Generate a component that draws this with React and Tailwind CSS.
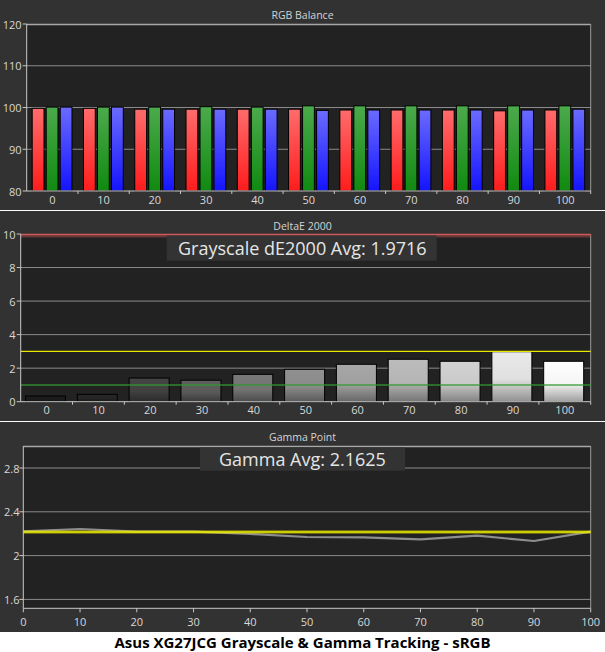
import React from 'react';

const rgbData = [
  [99.8, 100.1, 100.1],
  [99.8, 100.1, 100.1],
  [99.6, 100.1, 99.6],
  [99.6, 100.2, 99.6],
  [99.6, 100.1, 99.6],
  [99.6, 100.4, 99.3],
  [99.4, 100.4, 99.4],
  [99.4, 100.4, 99.4],
  [99.4, 100.4, 99.4],
  [99.2, 100.4, 99.4],
  [99.4, 100.4, 99.6],
];

const deltaData = [0.34, 0.44, 1.41, 1.28, 1.63, 1.93, 2.23, 2.53, 2.41, 2.98, 2.41];
const grays = ['#1c1c1c', '#262626', '#444444', '#5e5e5e', '#787878', '#909090', '#a6a6a6', '#bcbcbc', '#d2d2d2', '#e9e9e9', '#ffffff'];

// pixel offsets read off the original plot, svg coords
const gammaY = [85.3, 83, 85.7, 85.7, 88, 91, 91.3, 93.3, 89.7, 95, 85.7];

const steps = [0, 10, 20, 30, 40, 50, 60, 70, 80, 90, 100];

function Panel({ title, titleH, children }) {
  return (
    <div className="flex flex-col h-[210px] bg-[#323232]">
      <div className={`${titleH} pt-[8px] text-center text-[10.5px] leading-[14px] text-[#d4d4d4]`}>{title}</div>
      {children}
    </div>
  );
}

function RgbChart() {
  const left = 26.7, right = 590.7, bottom = 167;
  const gw = (right - left) / 11;
  const y = (v) => (bottom * (120 - v)) / 40;
  const fills = ['url(#red)', 'url(#green)', 'url(#blue)'];

  return (
    <svg width="605" height="186" className="block overflow-visible">
      <defs>
        <linearGradient id="red" x1="0" y1="0" x2="0" y2="1">
          <stop offset="0" stopColor="#ff6c6c" />
          <stop offset="1" stopColor="#ff1c1c" />
        </linearGradient>
        <linearGradient id="green" x1="0" y1="0" x2="0" y2="1">
          <stop offset="0" stopColor="#4caa4c" />
          <stop offset="1" stopColor="#108a10" />
        </linearGradient>
        <linearGradient id="blue" x1="0" y1="0" x2="0" y2="1">
          <stop offset="0" stopColor="#6b6bff" />
          <stop offset="1" stopColor="#1414ff" />
        </linearGradient>
      </defs>
      <rect x={left} y={0} width={right - left} height={bottom} fill="#222222" />
      {[110, 100, 90].map((v) => (
        <line key={v} x1={left} x2={right} y1={y(v)} y2={y(v)} stroke="#8a8a8a" />
      ))}
      <line x1={left} x2={right} y1={0.5} y2={0.5} stroke="#a8a8a8" strokeWidth="1.5" />
      <line x1={right} x2={right} y1={0} y2={bottom} stroke="#9a9a9a" />

      {rgbData.map((vals, i) =>
        vals.map((v, j) => (
          <rect
            key={`${i}-${j}`}
            x={left + i * gw + 5.5 + j * 14}
            y={y(v)}
            width={11.8}
            height={bottom - y(v)}
            fill={fills[j]}
            stroke="#000"
            strokeWidth="1"
          />
        ))
      )}

      <line x1={left} x2={left} y1={0} y2={bottom} stroke="#c8c8c8" />
      <line x1={left} x2={right} y1={bottom} y2={bottom} stroke="#c8c8c8" />
      {[120, 110, 100, 90, 80].map((v) => (
        <g key={v}>
          <line x1={left - 4} x2={left} y1={y(v)} y2={y(v)} stroke="#c8c8c8" />
          <text x={21.5} y={y(v)} textAnchor="end" dominantBaseline="central" fontSize="11" fill="#d8d8d8">{v}</text>
        </g>
      ))}
      {steps.map((s, i) => (
        <g key={s}>
          <line x1={left + (i + 1) * gw} x2={left + (i + 1) * gw} y1={bottom} y2={bottom + 3} stroke="#c8c8c8" />
          <text x={left + i * gw + gw / 2} y={bottom + 8} textAnchor="middle" dominantBaseline="central" fontSize="11" fill="#d8d8d8">{s}</text>
        </g>
      ))}
    </svg>
  );
}

function DeltaChart() {
  const left = 20.7, right = 590.7, bottom = 167.7;
  const gw = (right - left) / 11;
  const y = (v) => (bottom * (10 - v)) / 10;

  return (
    <svg width="605" height="187" className="block overflow-visible">
      <defs>
        <linearGradient id="shade" x1="0" y1="0" x2="0" y2="1">
          <stop offset="0" stopColor="#000" stopOpacity="0" />
          <stop offset="0.55" stopColor="#000" stopOpacity="0.04" />
          <stop offset="1" stopColor="#000" stopOpacity="0.38" />
        </linearGradient>
      </defs>
      <rect x={left} y={0} width={right - left} height={bottom} fill="#222222" />
      {[8, 6, 4, 2].map((v) => (
        <line key={v} x1={left} x2={right} y1={y(v)} y2={y(v)} stroke="#8a8a8a" />
      ))}
      <line x1={right} x2={right} y1={0} y2={bottom} stroke="#9a9a9a" />

      {deltaData.map((v, i) => (
        <g key={i}>
          <rect x={left + i * gw + 4.8} y={y(v)} width={40} height={bottom - y(v)} fill={grays[i]} />
          <rect x={left + i * gw + 4.8} y={y(v)} width={40} height={bottom - y(v)} fill="url(#shade)" stroke="#000" strokeWidth="1" />
        </g>
      ))}

      <line x1={left} x2={right} y1={2} y2={2} stroke="#b85050" strokeOpacity="0.45" strokeWidth="3" />
      <line x1={left} x2={right} y1={0.5} y2={0.5} stroke="#d05a5a" strokeWidth="1.5" />
      <line x1={left} x2={right} y1={y(3)} y2={y(3)} stroke="#e8e800" strokeWidth="1.3" />
      <line x1={left} x2={right} y1={y(1)} y2={y(1)} stroke="#2f9a2f" strokeOpacity="0.85" strokeWidth="1.5" />

      <rect x={166.7} y={1.5} width={270} height={25.2} fill="#333333" />
      <text x={178} y={13.5} dominantBaseline="central" fontSize="18" fill="#e6e6e6">Grayscale dE2000 Avg: 1.9716</text>

      <line x1={left} x2={left} y1={0} y2={bottom} stroke="#c8c8c8" />
      <line x1={left} x2={right} y1={bottom} y2={bottom} stroke="#c8c8c8" />
      {[10, 8, 6, 4, 2, 0].map((v) => (
        <g key={v}>
          <line x1={left - 4} x2={left} y1={y(v)} y2={y(v)} stroke="#c8c8c8" />
          <text x={15.5} y={y(v)} textAnchor="end" dominantBaseline="central" fontSize="11" fill="#d8d8d8">{v}</text>
        </g>
      ))}
      {steps.map((s, i) => (
        <g key={s}>
          <line x1={left + (i + 1) * gw} x2={left + (i + 1) * gw} y1={bottom} y2={bottom + 3} stroke="#c8c8c8" />
          <text x={left + i * gw + gw / 2} y={bottom + 8} textAnchor="middle" dominantBaseline="central" fontSize="11" fill="#d8d8d8">{s}</text>
        </g>
      ))}
    </svg>
  );
}

function GammaChart() {
  const left = 23.3, right = 590.7, bottom = 162.3;
  const step = (right - left) / 10;
  const y = (v) => 22 + (2.8 - v) * 109.5;
  const pts = gammaY.map((gy, i) => `${left + i * step},${gy}`).join(' ');

  return (
    <svg width="605" height="186" className="block overflow-visible">
      <rect x={left} y={0} width={right - left} height={bottom} fill="#222222" />
      {[2.8, 2.4, 2, 1.6].map((v) => (
        <line key={v} x1={left} x2={right} y1={y(v)} y2={y(v)} stroke="#8a8a8a" />
      ))}
      <line x1={left} x2={right} y1={0.5} y2={0.5} stroke="#a8a8a8" strokeWidth="1.5" />
      <line x1={right} x2={right} y1={0} y2={bottom} stroke="#9a9a9a" />

      <polyline points={pts} fill="none" stroke="#8e8e8e" strokeWidth="2.2" strokeLinejoin="round" />
      <line x1={left} x2={right} y1={86} y2={86} stroke="#e8e800" strokeOpacity="0.35" strokeWidth="4" />
      <line x1={left} x2={right} y1={86} y2={86} stroke="#f0f000" strokeWidth="1.5" />

      <rect x={200} y={1.5} width={205} height={23.2} fill="#333333" />
      <text x={219} y={12.5} dominantBaseline="central" fontSize="18" fill="#e6e6e6">Gamma Avg: 2.1625</text>

      <line x1={left} x2={left} y1={0} y2={bottom} stroke="#c8c8c8" />
      <line x1={left} x2={right} y1={bottom} y2={bottom} stroke="#c8c8c8" />
      {[2.8, 2.4, 2, 1.6].map((v) => (
        <g key={v}>
          <line x1={left - 4} x2={left} y1={y(v)} y2={y(v)} stroke="#c8c8c8" />
          <text x={19.5} y={y(v)} textAnchor="end" dominantBaseline="central" fontSize="11" fill="#d8d8d8">{v}</text>
        </g>
      ))}
      {steps.map((s, i) => (
        <g key={s}>
          <line x1={left + i * step} x2={left + i * step} y1={bottom} y2={bottom + 4} stroke="#c8c8c8" />
          <text x={left + i * step} y={bottom + 12.7} textAnchor="middle" dominantBaseline="central" fontSize="11" fill="#d8d8d8">{s}</text>
        </g>
      ))}
    </svg>
  );
}

function App() {
  return (
    <div className="w-[605px] h-[652px] flex flex-col bg-white font-['Open_Sans',sans-serif]">
      <Panel title="RGB Balance" titleH="h-[24px]">
        <RgbChart />
      </Panel>
      <div className="h-px bg-white" />
      <Panel title="DeltaE 2000" titleH="h-[23px]">
        <DeltaChart />
      </Panel>
      <div className="h-px bg-white" />
      <Panel title="Gamma Point" titleH="h-[24px]">
        <GammaChart />
      </Panel>
      <div className="h-[20px] bg-white text-center text-[15px] leading-[20px] font-bold text-black">
        Asus XG27JCG Grayscale &amp; Gamma Tracking - sRGB
      </div>
    </div>
  );
}

export default App;
